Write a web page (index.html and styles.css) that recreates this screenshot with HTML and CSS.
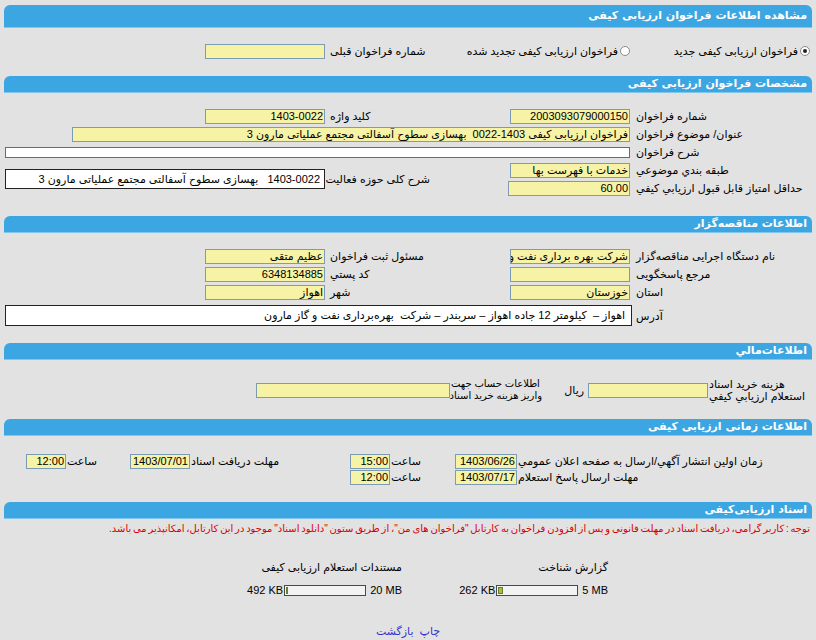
FILE: index.html
```html
<!DOCTYPE html>
<html lang="fa" dir="rtl">
<head>
<meta charset="utf-8">
<title>مشاهده اطلاعات فراخوان ارزیابی کیفی</title>
<link rel="stylesheet" href="styles.css">
</head>
<body>
<div class="bar main">مشاهده اطلاعات فراخوان ارزیابی کیفی</div>
<div class="sec s1">
  <div class="g4">
    <div class="opt opt-a"><span class="radio on"></span><span>فراخوان ارزیابی کیفی جدید</span></div>
    <div class="opt opt-b"><span class="radio"></span><span>فراخوان ارزیابی کیفی تجدید شده</span></div>
    <div class="lbl">شماره فراخوان قبلی</div>
    <div class="fld w120 in-d"></div>
  </div>
</div>

<div class="bar">مشخصات فراخوان ارزیابی کیفی</div>
<div class="sec s2">
  <div class="g4">
    <div class="lbl lbl-a">شماره فراخوان</div>
    <div class="fld w120 in-b">2003093079000150</div>
    <div class="lbl">کلید واژه</div>
    <div class="fld w120 in-d">1403-0022</div>

    <div class="lbl lbl-a">عنوان/ موضوع فراخوان</div>
    <div class="fld in-b span3 title-fld">فراخوان ارزیابی کیفی 1403-0022&nbsp; بهسازی سطوح آسفالتی مجتمع عملیاتی مارون 3</div>

    <div class="lbl lbl-a">شرح فراخوان</div>
    <div class="fld white thin in-b span3 desc-fld"></div>

    <div class="lbl lbl-a">طبقه بندي موضوعي</div>
    <div class="fld w120 in-b">خدمات با فهرست بها</div>
    <div class="lbl rows2">شرح کلی حوزه فعالیت</div>
    <div class="box in-d rows2 scope">1403-0022&nbsp;&nbsp; بهسازی سطوح آسفالتی مجتمع عملیاتی مارون 3</div>

    <div class="lbl lbl-a">حداقل امتیاز قابل قبول ارزیابي کیفي</div>
    <div class="fld w122 in-b">60.00</div>
  </div>
</div>

<div class="bar">اطلاعات مناقصه‌گزار</div>
<div class="sec s3">
  <div class="g4">
    <div class="lbl lbl-a">نام دستگاه اجرایی مناقصه‌گزار</div>
    <div class="fld w120 in-b">شرکت بهره برداری نفت و گاز مارون</div>
    <div class="lbl">مسئول ثبت فراخوان</div>
    <div class="fld w120 in-d">عظیم متقی</div>

    <div class="lbl lbl-a">مرجع پاسخگویی</div>
    <div class="fld w120 in-b"></div>
    <div class="lbl">کد پستي</div>
    <div class="fld w120 in-d">6348134885</div>

    <div class="lbl lbl-a">استان</div>
    <div class="fld w120 in-b">خوزستان</div>
    <div class="lbl">شهر</div>
    <div class="fld w120 in-d">اهواز</div>

    <div class="lbl lbl-a addr-lbl">آدرس</div>
    <div class="box span3 addr">اهواز –&nbsp; کیلومتر 12 جاده اهواز – سربندر – شرکت&nbsp; بهره‌برداری نفت و گاز مارون</div>
  </div>
</div>

<div class="bar">اطلاعات‌مالي</div>
<div class="sec s4">
  <div class="g-fin">
    <div class="lbl two">هزینه خرید اسناد<br>استعلام ارزیابي کیفي</div>
    <div class="fld w120 in-fin"></div>
    <div class="rial">ریال</div>
    <div class="lbl two acc">اطلاعات حساب جهت<br>واریز هزینه خرید اسناد</div>
    <div class="fld w194"></div>
  </div>
</div>

<div class="bar">اطلاعات زمانی ارزیابی کیفی</div>
<div class="sec s5">
  <div class="g-time">
    <div class="lbl t0">زمان اولین انتشار آگهي/ارسال به صفحه اعلان عمومي</div>
    <div class="fld date">1403/06/26</div>
    <div class="lbl t0">ساعت</div>
    <div class="fld time">15:00</div>
    <div class="lbl t0">مهلت دریافت اسناد</div>
    <div class="fld date d2">1403/07/01</div>
    <div class="lbl t0">ساعت</div>
    <div class="fld time">12:00</div>

    <div class="lbl t0">مهلت ارسال پاسخ استعلام</div>
    <div class="fld date">1403/07/17</div>
    <div class="lbl t0">ساعت</div>
    <div class="fld time">12:00</div>
  </div>
</div>

<div class="bar">اسناد ارزیابی‌کیفی</div>
<div class="sec s6">
  <div class="note">توجه : کاربر گرامی، دریافت اسناد در مهلت قانونی و پس از افزودن فراخوان به کارتابل "فراخوان های من"، از طریق ستون "دانلود اسناد" موجود در این کارتابل، امکانپذیر می باشد.</div>
  <div class="docs">
    <div class="doc">
      <div class="doc-title">گزارش شناخت</div>
      <div class="prog">
        <span class="cap" dir="ltr">5 MB</span>
        <span class="pbar"><span class="pfill" style="width:5px"></span></span>
        <span class="used" dir="ltr">262 KB</span>
      </div>
    </div>
    <div class="doc">
      <div class="doc-title">مستندات استعلام ارزیابی کیفی</div>
      <div class="prog">
        <span class="cap" dir="ltr">20 MB</span>
        <span class="pbar"><span class="pfill" style="width:2px"></span></span>
        <span class="used" dir="ltr">492 KB</span>
      </div>
    </div>
  </div>
  <div class="links"><a href="#">چاپ</a>&nbsp; <a href="#">بازگشت</a></div>
</div>
</body>
</html>
```

FILE: styles.css
```css
* { box-sizing: border-box; }

html { background: #e2e2e2; }

body {
  margin: 4px;
  background: #e2e2e2;
  color: #000;
  direction: rtl;
  font-family: "Liberation Sans", "DejaVu Sans", sans-serif;
  font-size: 11px;
}

/* section header bars */
.bar {
  height: 17px;
  line-height: 16px;
  padding: 0 5px;
  background: #3ba6e1;
  border-bottom: 1px solid #82c6ee;
  border-radius: 6px 6px 0 0;
  color: #fff;
  font-family: "DejaVu Sans", sans-serif;
  font-size: 11px;
  font-weight: bold;
  white-space: nowrap;
}
.bar.main {
  height: 23px;
  line-height: 22px;
  margin-top: 1px;
}

/* section bodies */
.s1 { padding: 14px 0 16px; }
.s2 { padding: 14px 0 19px; }
.s3 { padding: 14px 0 17px; }
.s4 { padding: 18px 0 17px; }
.s5 { padding: 17px 0 17px; }
.s6 { padding: 3px 0 0; }

/* four-column label/field grid (right to left) */
.g4 {
  display: grid;
  grid-template-columns: 179px 203px 103px 323px;
  grid-auto-rows: 18px;
  align-items: center;
}

.lbl {
  text-align: left;
  padding-left: 3px;
  white-space: nowrap;
  line-height: 13px;
}

.fld {
  height: 15px;
  line-height: 13px;
  padding: 0 1px;
  background: #f6f3a6;
  border: 1px solid #7b9cb4;
  overflow: hidden;
  white-space: nowrap;
  text-align: right;
}
.fld.white { background: #fff; border-color: #6a6a6a; }
.fld.thin { height: 11px; }

.w120 { width: 120px; }
.w122 { width: 122px; }
.w194 { width: 194px; }

.in-b { justify-self: start; margin-right: 3px; }
.in-d { justify-self: start; margin-right: 2px; }
.span3 { grid-column: span 3; }
.title-fld { width: 558px; }
.desc-fld { width: 625px; }

.rows2 { grid-row: span 2; }

.box {
  background: #fff;
  border: 1px solid #222;
  white-space: nowrap;
  overflow: hidden;
  text-align: right;
  padding: 0 4px;
}
.scope {
  width: 320px;
  height: 20px;
  line-height: 18px;
  align-self: center;
}
.addr {
  justify-self: start;
  align-self: end;
  width: 627px;
  height: 21px;
  line-height: 19px;
  margin-right: 1px;
  padding: 0 6px;
}
.addr-lbl { align-self: end; line-height: 19px; }
.s3 .g4 { grid-template-rows: 18px 18px 18px 25px; }

/* radio options */
.opt {
  display: flex;
  align-items: center;
  gap: 2px;
  white-space: nowrap;
}
.opt-a { padding-right: 2px; }
.opt-b { padding-right: 3px; }

.radio {
  width: 10px;
  height: 10px;
  border: 1px solid #8a8a8a;
  border-radius: 50%;
  background: #fff;
  flex: none;
  display: flex;
  align-items: center;
  justify-content: center;
}
.radio.on::after {
  content: "";
  width: 4px;
  height: 4px;
  border-radius: 50%;
  background: #222;
}

/* financial row */
.g-fin {
  display: grid;
  grid-template-columns: 104px 120px 46px 92px 446px;
  height: 24px;
  align-items: center;
}
.lbl.two { line-height: 12px; padding-left: 1px; }
.lbl.acc { font-size: 10px; }
.in-fin { justify-self: start; }
.rial { text-align: right; padding-right: 4px; }
.g-fin .w194 { justify-self: start; }

/* time rows */
.g-time {
  display: grid;
  grid-template-columns: 295px 62px 65px 90px 110px 59px 65px 62px;
  grid-auto-rows: 16px;
  align-items: center;
}
.lbl.t0 { padding-left: 1px; }
.date { width: 62px; justify-self: start; }
.date.d2 { width: 60px; }
.time { width: 40px; justify-self: start; }

/* documents */
.note {
  color: #d80000;
  font-size: 10px;
  word-spacing: -1px;
  line-height: 14px;
  padding-right: 2px;
  white-space: nowrap;
}
.docs {
  display: flex;
  margin-top: 24px;
  padding-right: 204px;
}
.doc { width: 206px; }
.doc-title { line-height: 14px; }
.prog {
  display: flex;
  align-items: center;
  margin-top: 9px;
  height: 14px;
  line-height: 14px;
}
.cap, .used { unicode-bidi: isolate; white-space: nowrap; }
.cap { margin-left: 4px; }
.used { margin-right: 1px; }
.pbar {
  direction: ltr;
  width: 82px;
  height: 11px;
  border: 1px solid #4a4a4a;
  background: #f3f3f3;
  display: flex;
  padding: 1px;
}
.pfill {
  display: block;
  height: 100%;
  background: #9cc43a;
  border: 1px solid #6b7f2a;
}
.links {
  margin-top: 27px;
  text-align: center;
  line-height: 14px;
}
.links a {
  color: #3333cc;
  text-decoration: none;
}
```
